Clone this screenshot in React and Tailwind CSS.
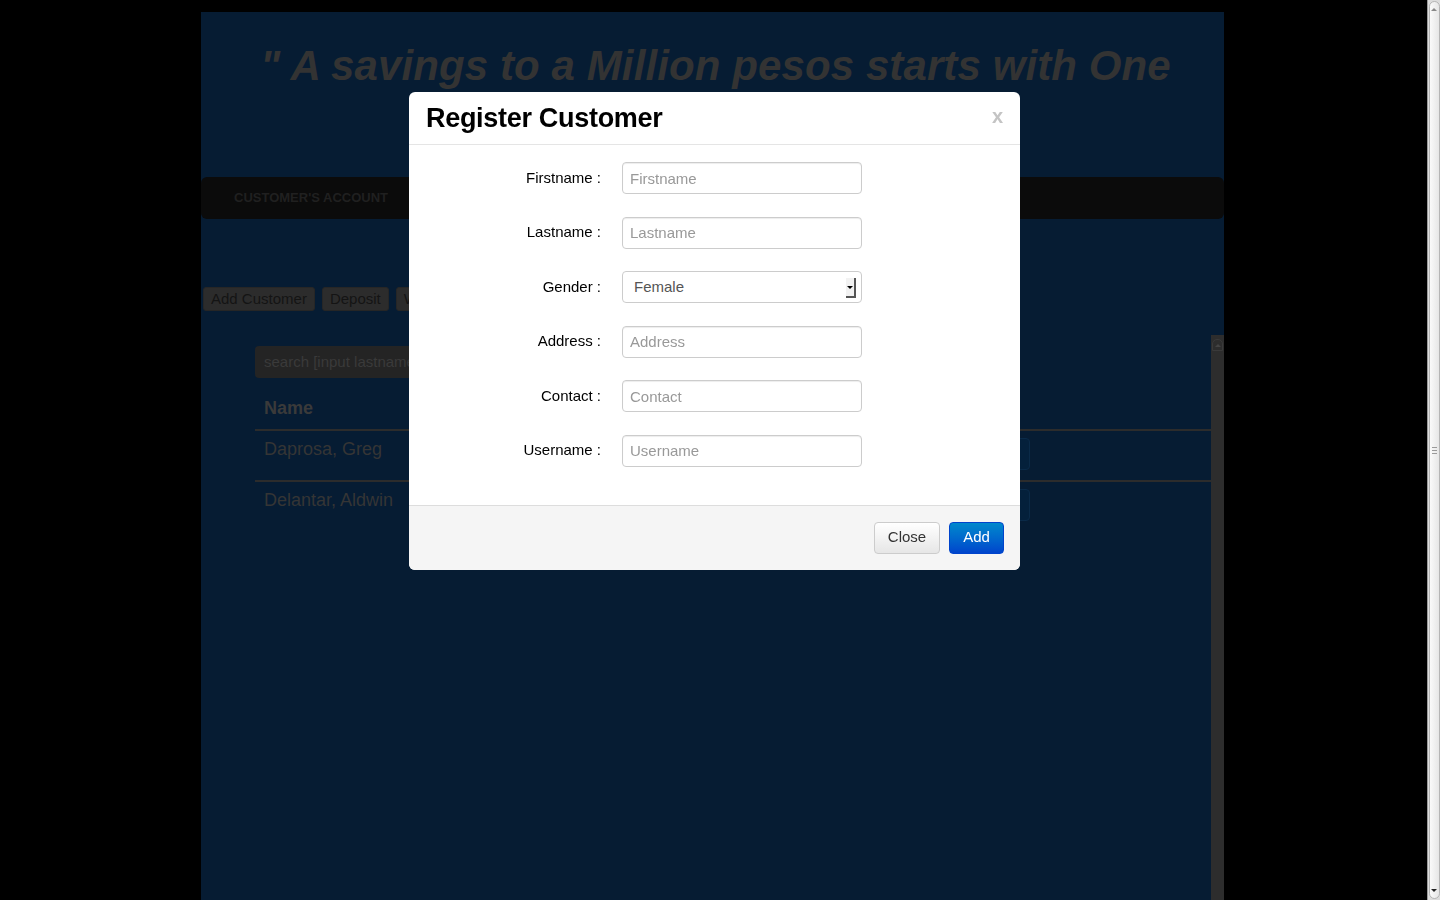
import React from 'react';

const font = { fontFamily: '"Liberation Sans", Arial, sans-serif' };

const fields = [
  { label: 'Firstname :', placeholder: 'Firstname' },
  { label: 'Lastname :', placeholder: 'Lastname' },
  { label: 'Gender :', select: true },
  { label: 'Address :', placeholder: 'Address' },
  { label: 'Contact :', placeholder: 'Contact' },
  { label: 'Username :', placeholder: 'Username' },
];

const customers = ['Daprosa, Greg', 'Delantar, Aldwin'];

const WindowScrollbar = () => (
  <div className="w-[13px] h-[900px] bg-[#dcdcdc] border-l border-[#9a9a9a] flex flex-col items-center py-[1px]">
    <div className="w-[11px] flex-1 rounded-[6px] border border-[#b5b5b5] bg-gradient-to-r from-[#fafafa] to-[#e6e6e6] flex flex-col items-center justify-between py-[6px]">
      <div className="w-0 h-0 border-l-[3px] border-r-[3px] border-b-[3px] border-l-transparent border-r-transparent border-b-[#888]" />
      <div className="flex flex-col gap-[2px]">
        <div className="w-[5px] h-[1px] bg-[#999]" />
        <div className="w-[5px] h-[1px] bg-[#999]" />
        <div className="w-[5px] h-[1px] bg-[#999]" />
      </div>
      <div className="w-0 h-0 border-l-[3px] border-r-[3px] border-t-[3px] border-l-transparent border-r-transparent border-t-[#222]" />
    </div>
  </div>
);

const Modal = () => (
  <div className="fixed left-[409px] top-[92px] w-[611px] bg-white rounded-[6px] overflow-hidden" style={font}>
    <div className="h-[53px] border-b border-[#e5e5e5] flex items-center justify-between pl-[17px] pr-[17px]">
      <h3 className="text-[27px] font-bold text-black leading-none tracking-[-0.3px]">Register Customer</h3>
      <span className="text-[20px] font-bold text-[#c4c4c4] leading-none -mt-[4px]">x</span>
    </div>
    <div className="pt-[17px] pb-[38px] flex flex-col gap-[22.5px]">
      {fields.map((f) => (
        <div key={f.label} className="flex items-center h-[32px]">
          <label className="w-[192px] text-right text-[15px] text-black">{f.label}</label>
          <div className="ml-[21px] w-[240px] h-[32px]">
            {f.select ? (
              <div className="relative w-full h-full rounded-[4px] border border-[#ccc] bg-white flex items-center pl-[11px] text-[15px] text-[#555]">
                Female
                <span className="absolute right-[5px] top-[6px] w-[10px] h-[20px] bg-[#f2f2f2] border-r-[2px] border-b-[2px] border-[#555] flex items-center justify-center">
                  <span className="w-0 h-0 border-l-[3px] border-r-[3px] border-t-[3px] border-l-transparent border-r-transparent border-t-black" />
                </span>
              </div>
            ) : (
              <input
                placeholder={f.placeholder}
                className="w-full h-full rounded-[4px] border border-[#ccc] px-[7px] text-[15px] text-[#555] placeholder:text-[#999] shadow-[inset_0_1px_1px_rgba(0,0,0,0.075)] outline-none"
                style={font}
              />
            )}
          </div>
        </div>
      ))}
    </div>
    <div className="h-[65px] bg-[#f5f5f5] border-t border-[#ddd] flex items-center justify-end gap-[9px] pr-[16px]">
      <button className="h-[32px] w-[66px] rounded-[4px] border border-[#ccc] bg-gradient-to-b from-white to-[#e6e6e6] text-[15px] text-[#333]" style={font}>Close</button>
      <button className="h-[32px] w-[55px] rounded-[4px] border border-[#0044cc] bg-gradient-to-b from-[#0088cc] to-[#0044cc] text-[15px] text-white" style={font}>Add</button>
    </div>
  </div>
);

export default function App() {
  return (
    <div className="h-screen overflow-hidden bg-black flex" style={font}>
      <div className="flex-1 pl-[201px]">
        <div className="w-[1023px] h-[888px] mt-[12px] bg-[#061c33] flex flex-col">
          <div className="h-[165px] pt-[33px] pl-[6px] text-center">
            <h1 className="text-[42px] font-bold italic text-[#333] leading-none tracking-[0.1px]">" A savings to a Million pesos starts with One</h1>
          </div>
          <div className="h-[42px] rounded-[6px] bg-[#0b0b0b] flex items-center pl-[33px]">
            <span className="text-[13px] font-bold text-[#202020]">CUSTOMER'S ACCOUNT</span>
          </div>
          <div className="mt-[68px] pl-[2px] flex gap-[7px]">
            {['Add Customer', 'Deposit', 'Withdraw'].map((b) => (
              <button key={b} className="h-[24px] px-[7px] rounded-[3px] bg-[#2c2c2c] border border-[#262626] text-[15px] text-[#141414]" style={font}>{b}</button>
            ))}
          </div>
          <div className="mt-[24px] flex-1 flex">
            <div className="flex-1 pl-[54px] pt-[11px]">
              <div className="w-[300px] h-[32px] rounded-[4px] bg-[#242424] flex items-center pl-[9px] text-[15px] text-[#3a3a3a]">search [input lastname]</div>
              <div className="mt-[16px] h-[37px] pt-[1px] border-b-[2px] border-[#2c2c2c] flex items-start pl-[9px]">
                <span className="text-[18px] font-bold text-[#3a3a3a]">Name</span>
              </div>
              {customers.map((c, i) => (
                <div key={c} className={`h-[51px] flex items-start ${i === 0 ? 'border-b-[2px] border-[#2c2c2c]' : ''}`}>
                  <span className="flex-1 pl-[9px] pt-[5px] text-[18px] text-[#353535]">{c}</span>
                  <div className="mt-[7px] mr-[181px] w-[80px] h-[32px] rounded-[4px] bg-[#04203b] border border-[#0a2a48]" />
                </div>
              ))}
            </div>
            <div className="w-[13px] bg-[#2d2d2d] flex flex-col items-center pt-[4px]">
              <div className="w-[11px] h-[12px] rounded-t-[5px] border border-[#3a3a3a] flex items-center justify-center">
                <span className="w-0 h-0 border-l-[3px] border-r-[3px] border-b-[3px] border-l-transparent border-r-transparent border-b-[#444]" />
              </div>
            </div>
          </div>
        </div>
      </div>
      <WindowScrollbar />
      <Modal />
    </div>
  );
}
